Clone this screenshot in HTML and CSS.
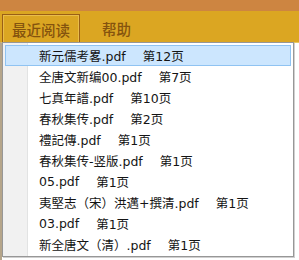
FILE: index.html
```html
<!DOCTYPE html>
<html lang="zh-CN">
<head>
  <meta charset="UTF-8">
  <meta name="viewport" content="width=device-width, initial-scale=1.0">
  <title>最近阅读</title>
  <link rel="stylesheet" href="styles.css">
</head>
<body>
  <div class="title-strip"></div>
  <div class="menubar">
    <div class="menu-tab active">最近阅读</div>
    <div class="menu-tab">帮助</div>
  </div>
  <div class="content"></div>

  <ul class="dropdown">
    <li class="item selected"><span class="name">新元儒考畧.pdf</span><span class="page">第12页</span></li>
    <li class="item"><span class="name">全唐文新编00.pdf</span><span class="page">第7页</span></li>
    <li class="item"><span class="name">七真年譜.pdf</span><span class="page">第10页</span></li>
    <li class="item"><span class="name">春秋集传.pdf</span><span class="page">第2页</span></li>
    <li class="item"><span class="name">禮記傳.pdf</span><span class="page">第1页</span></li>
    <li class="item"><span class="name">春秋集传-竖版.pdf</span><span class="page">第1页</span></li>
    <li class="item"><span class="name">05.pdf</span><span class="page">第1页</span></li>
    <li class="item"><span class="name">夷堅志（宋）洪邁+撰清.pdf</span><span class="page">第1页</span></li>
    <li class="item"><span class="name">03.pdf</span><span class="page">第1页</span></li>
    <li class="item"><span class="name">新全唐文（清）.pdf</span><span class="page">第1页</span></li>
  </ul>
</body>
</html>
```

FILE: styles.css
```css
body {
  margin: 0;
  padding: 0;
  width: 299px;
  height: 260px;
  overflow: hidden;
  background-color: #ffffff;
  font-family: "DejaVu Sans", "Noto Sans CJK SC", sans-serif;
  position: relative;
}

.title-strip {
  height: 11px;
  background-color: #cd8541;
}

.menubar {
  height: 31px;
  background-color: #dba622;
  display: flex;
  align-items: flex-end;
  padding-left: 2px;
  gap: 12px;
}

.menu-tab {
  height: 28px;
  padding: 0 10px;
  display: flex;
  align-items: center;
  font-family: "Noto Sans CJK SC", sans-serif;
  font-size: 14.5px;
  font-weight: 500;
  color: #84530e;
  box-sizing: border-box;
}

.menu-tab.active {
  width: 78px;
  border: 1px solid #9a5f16;
  border-bottom: none;
  box-shadow: inset 1px 1px 0 #e9bd4a, inset -1px 0 0 #e9bd4a;
  justify-content: center;
  padding: 2px 0 0 0;
}

.content {
  height: 218px;
  border-left: 2px solid #b5a58a;
  border-top: 1px solid #e8c860;
}

.dropdown {
  position: absolute;
  left: 2px;
  top: 42px;
  width: 292px;
  margin: 0;
  padding: 2px 0 1px 0;
  list-style: none;
  box-sizing: border-box;
  border: 1px solid #979797;
  box-shadow: 1px 1px 0 #d0d0d0;
  background: linear-gradient(to right, #f1f1f1 0, #f1f1f1 24px, #e2e3e3 24px, #e2e3e3 25px, #ffffff 25px);
}

.item {
  height: 21px;
  margin: 0 2px;
  border: 1px solid transparent;
  box-sizing: border-box;
  display: flex;
  align-items: center;
  padding-left: 33px;
  font-size: 12.5px;
  color: #141414;
  white-space: nowrap;
}

.item.selected {
  background-color: #cce6fe;
  border-color: #8fc3f2;
}

.page {
  margin-left: 17px;
}
```
